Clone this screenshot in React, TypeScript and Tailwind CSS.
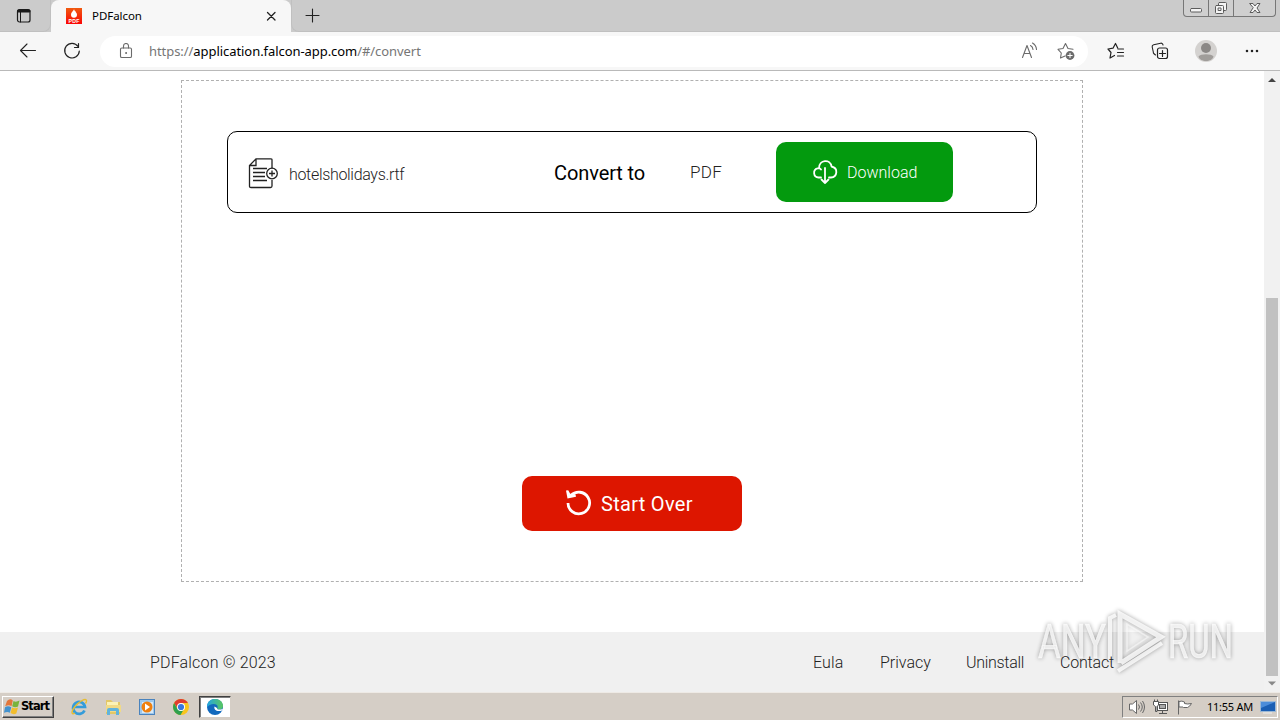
import type { ReactNode } from "react";

const footerLinks = [
  { label: "Eula", className: "w-[31px] tracking-[0.150px]" },
  { label: "Privacy", className: "ml-9 w-[51px]" },
  { label: "Uninstall", className: "ml-[35px] w-[58px] tracking-[-0.300px]" },
  { label: "Contact", className: "ml-9 w-[54px] tracking-[-0.200px]" },
];

function Icon({ size = 16, className = "", children }: { size?: number; className?: string; children: ReactNode }) {
  return (
    <svg
      width={size}
      height={size}
      viewBox={`0 0 ${size} ${size}`}
      fill="none"
      stroke="currentColor"
      strokeLinecap="round"
      strokeLinejoin="round"
      className={`block shrink-0 ${className}`}
    >
      {children}
    </svg>
  );
}

function WindowControls() {
  return (
    <div className="mr-[4px] ml-auto flex h-[17px] w-[93px] rounded-b-[4px] border border-t-0 border-[#777] bg-[#cfcfcf] text-[#5c5c5c]">
      <div className="flex w-[25px] justify-center border-r border-[#777]">
        <Icon size={14} className="mt-[1px]">
          <rect x="1.500" y="7.500" width="11" height="3.500" rx="1" fill="#f4f4f4" />
        </Icon>
      </div>
      <div className="flex w-[25px] justify-center border-r border-[#777]">
        <Icon size={14} className="mt-[1px]">
          <rect x="4.500" y="1.500" width="8" height="8" rx="1" fill="#f4f4f4" />
          <rect x="1.500" y="4.500" width="8" height="8" rx="1" fill="#f4f4f4" />
          <rect x="4.500" y="7" width="2.500" height="2.500" />
        </Icon>
      </div>
      <div className="flex flex-1 justify-center">
        <Icon size={14} className="mt-[1px]">
          <path d="M2 2.500h3l2 2.500 2-2.500h3L9 7l3 4.500H9L7 9l-2 2.500H2L5 7z" fill="#f4f4f4" />
        </Icon>
      </div>
    </div>
  );
}

function TabStrip() {
  return (
    <div className="flex h-8 shrink-0 bg-[#cbcbcb]">
      <div className="flex w-[51px] rounded-br-lg border-r border-b border-[#c0c0c0] pt-2 pl-4">
        <Icon className="text-[#1b1b1b]">
          <rect x="1.500" y="1.500" width="12.500" height="12.500" rx="2" strokeWidth="1.200" />
          <path d="M2.500 3h10.500" strokeWidth="3" />
          <path d="M4.500 4v10" strokeWidth="1" />
        </Icon>
      </div>
      <div className="flex h-8 w-[240px] rounded-t-lg bg-[#f7f7f7] pl-[15px]">
        <svg width="16" height="16" viewBox="0 0 16 16" className="mt-2 shrink-0">
          <defs>
            <linearGradient id="fav" x1="0" y1="0" x2="0" y2="1">
              <stop offset="0" stopColor="#f05a10" />
              <stop offset="1" stopColor="#fa0505" />
            </linearGradient>
          </defs>
          <rect width="16" height="16" fill="url(#fav)" />
          <path d="M8 1c-.2 2-3 3-3 5.700a3 3 0 0 0 6 0C11 5 9.500 4.500 9.500 3.300 8.800 3 8.200 2 8 1z" fill="#fff" />
          <text x="2.500" y="15" fontSize="5.200" fontWeight="700" fill="#fff" textLength="11" fontFamily="Liberation Sans, sans-serif">
            PDF
          </text>
        </svg>
        <span className="mt-2 ml-[10px] w-[50px] text-[11.500px] leading-4 tracking-[-0.050px] whitespace-nowrap">PDFalcon</span>
        <Icon size={10} className="mt-[11px] ml-[124px] text-[#222]">
          <path d="M1.500 1.500l7.500 7.500M9 1.500L1.500 9" strokeWidth="1.300" />
        </Icon>
      </div>
      <div className="flex flex-1 rounded-bl-lg border-b border-l border-[#c0c0c0] pl-[13px]">
        <Icon className="mt-2 text-[#222]">
          <path d="M7.500 1v13M1 7.500h13" strokeWidth="1.100" />
        </Icon>
        <WindowControls />
      </div>
    </div>
  );
}

function Toolbar() {
  return (
    <div className="flex h-[39px] shrink-0 items-center border-b border-[#b9b9b9] bg-[#f7f7f7] text-[#222]">
      <Icon size={18} className="ml-[19px]">
        <path d="M16.500 8.500h-15M8 2L1.500 8.500 8 15" strokeWidth="1.100" />
      </Icon>
      <Icon size={18} className="ml-[26px]">
        <path d="M15 4.500A7.300 7.300 0 1 0 16.300 9M15.500 1.500v4h-4" strokeWidth="1.200" />
      </Icon>
      <div className="ml-[19px] flex h-[31px] w-[988px] items-center rounded-full bg-white">
        <Icon className="ml-[18px] text-[#6b6b6b]">
          <rect x="2.500" y="5" width="11" height="9.500" rx="1.300" strokeWidth="1.100" />
          <path d="M5.500 5V3a2.500 2.500 0 0 1 5 0v2" strokeWidth="1.100" />
          <circle cx="8" cy="10" r=".5" fill="currentColor" />
        </Icon>
        <div className="ml-[15px] w-[860px] text-[13px] leading-4 tracking-[-0.060px] whitespace-nowrap text-[#767676]">
          https://<span className="text-black">application.falcon-app.com</span>/#/convert
        </div>
        <Icon size={18} className="ml-[12px] text-[#6b6b6b]">
          <path d="M1.500 15.500L6 3.500l4.500 12M3 11.500h6M9.500 3.500a5 5 0 0 1 2.500 4M11.500 1a8 8 0 0 1 4 6.500" strokeWidth="1.100" />
        </Icon>
        <Icon size={18} className="ml-[18px] text-[#6b6b6b]">
          <path d="M8 14l-4.500 2 .8-5L1 7.300l5-.8 2.500-5 2.500 5 5 .8" strokeWidth="1.100" />
          <circle cx="13" cy="13.500" r="4.400" fill="currentColor" stroke="none" />
          <path d="M13 11.300v4.400M10.800 13.500h4.400" stroke="#fff" />
        </Icon>
      </div>
      <Icon size={18} className="ml-[19px]">
        <path d="M7.500 13.500L3 16l1-5.500L1 7l5-.8 2.500-4.700 2.200 4.500M11 7h5.500M10.500 10.500h6M10.500 14h6" strokeWidth="1.200" />
      </Icon>
      <Icon size={18} className="ml-[26px]">
        <path d="M4.500 13L3 11.800A2 2 0 0 1 2.300 10L1.200 5a2 2 0 0 1 1.500-2.300l7-1.500A2 2 0 0 1 12 3" strokeWidth="1.100" />
        <rect x="6.500" y="6" width="10" height="10.500" rx="2" strokeWidth="1.200" />
        <path d="M11.500 8.500v6M8.500 11.500h6" strokeWidth="1.200" />
      </Icon>
      <svg width="22" height="22" viewBox="0 0 22 22" className="ml-[26px] shrink-0">
        <circle cx="11" cy="11" r="11" fill="#d4d2d0" />
        <circle cx="11" cy="8" r="5" fill="#8b8886" />
        <path d="M3.500 16.500c2-3 13-3 15 0-1.500 6-13.500 6-15 0z" fill="#a09d9a" />
      </svg>
      <Icon size={18} className="ml-[26px]">
        <path d="M4 9h.01M9 9h.01M14 9h.01" strokeWidth="2.600" />
      </Icon>
    </div>
  );
}

function FileRow() {
  return (
    <div className="flex h-[82px] items-center rounded-[10px] border border-black">
      <svg width="31" height="31" viewBox="0 0 31 31" fill="none" stroke="#222" strokeWidth="1.300" className="mt-[3px] ml-5 shrink-0">
        <path d="M24 10.500V2Q24 .800 22.500 .800H8L1.500 7.500V28.500Q1.500 29.500 3 29.500H22.500q1.500 0 1.500-1.500V22M8 1v6.500H1.500" />
        <path d="M5 10.500h14M5 14.500h12M5 18.500h12M5 22.500h14" />
        <circle cx="24" cy="15.500" r="5.300" />
        <path d="M24 12.500v6M21 15.500h6" />
      </svg>
      <span className="mt-[5px] ml-[10px] w-[265px] text-[16px] font-light tracking-[-0.320px] text-[#222]">hotelsholidays.rtf</span>
      <span className="mt-[2px] w-[136px] text-[20px] tracking-[-0.100px] text-black">Convert to</span>
      <span className="mt-px w-[86px] text-[17px] font-light tracking-[0.300px] text-[#222]">PDF</span>
      <button className="flex h-[60px] w-[177px] items-center rounded-[10px] bg-[#039a0e] pl-9 text-white">
        <svg width="26" height="26" viewBox="0 0 26 26" fill="none" stroke="currentColor" strokeWidth="1.800" strokeLinecap="round" strokeLinejoin="round">
          <path d="M9 18.500H6.500A4.700 4.700 0 0 1 5.500 9.300C6.500 9 8 9 9 10.500M7 9.300C7 .5 18.500-.5 19.500 7.500 26.500 9 25.500 18 19 18.500h-2" />
          <path d="M13 9v15M9.500 20.500L13 24l3.500-3.500" />
        </svg>
        <span className="mt-px ml-[9px] text-[16px] font-light">Download</span>
      </button>
    </div>
  );
}

function Scrollbar() {
  return (
    <div className="flex w-4 shrink-0 flex-col items-center bg-[#f1f1f1]">
      <svg width="16" height="17" viewBox="0 0 16 17">
        <path d="M4 11l4-4 4 4z" fill="#444" />
      </svg>
      <div className="mt-[210px] h-[378px] w-3 bg-[#c1c1c1]" />
      <svg width="16" height="16" viewBox="0 0 16 16">
        <path d="M4 5.500h8l-4 4z" fill="#888" />
      </svg>
    </div>
  );
}

function Watermark() {
  return (
    <svg
      width="226"
      height="80"
      viewBox="0 0 226 80"
      className="pointer-events-none absolute top-[605px] left-[1034px] drop-shadow-[0_0_2px_rgba(0,0,0,0.45)]"
    >
      <g fill="#fff" fillOpacity=".75" stroke="#fff" strokeOpacity=".75" strokeWidth=".6" fontFamily="Roboto, sans-serif" fontSize="48">
        <text x="4" y="53" textLength="68" lengthAdjust="spacingAndGlyphs">ANY</text>
        <text x="134" y="53" textLength="65" lengthAdjust="spacingAndGlyphs">RUN</text>
      </g>
      <g fill="none" stroke="#fff" strokeOpacity=".8">
        <path d="M86 58V9l41 23-40 26" strokeWidth="5" />
        <path d="M76 56V13l6-3M84 66l44-28" strokeWidth="4" />
        <path d="M93 19v27l21-14z" strokeWidth="1.500" strokeOpacity=".5" />
      </g>
    </svg>
  );
}

function WindowsFlag() {
  return (
    <svg width="16" height="16" viewBox="0 0 16 16">
      <path d="M3 2Q6-1 8.800 1.500L7.500 7.200Q5 5.500 1.200 7.200z" fill="#e3763a" />
      <path d="M9.500 2Q12 3.500 15.500 1.500L14 7.500Q11 9 8.200 7.200z" fill="#79b33c" />
      <path d="M1 8.200Q4 6.500 7.300 8.200L5.800 13.800Q3.500 12 0 13.800z" fill="#4392ce" />
      <path d="M8 8.500q3 1.500 6 0L12.300 14.500q-2.800 1.500-5.800-.5z" fill="#f2bd2c" />
    </svg>
  );
}

function Taskbar() {
  return (
    <div className="flex h-7 shrink-0 items-center border-t border-[#eeeae5] bg-[#d5cec6] pt-px">
      <button className="ml-[2px] flex h-[22px] w-[52px] items-center border border-white border-r-[#404040] border-b-[#404040] pl-[1px] shadow-[inset_-1px_-1px_0_#808080]">
        <WindowsFlag />
        <span className="ml-px font-['DejaVu_Sans'] text-[11.500px] font-bold tracking-[-0.950px]">Start</span>
      </button>
      <svg width="18" height="18" viewBox="0 0 18 18" fill="none" className="ml-4">
        <path d="M14.500 12.500A6 6 0 1 1 15 9H4" stroke="#349cda" strokeWidth="2.700" />
        <path d="M5 15c-4 2.500-4-1.500 0-6.500S16-.5 16.500 2.500c.2 1-.3 2-1 3" stroke="#e6bd32" strokeWidth="1.400" />
      </svg>
      <svg width="18" height="18" viewBox="0 0 18 18" className="ml-4">
        <path d="M2 2h5l2 2h7v12H2z" fill="#e3c766" />
        <path d="M3 4h11v3H3z" fill="#fcf2b5" />
        <path d="M2 7h15v7H2z" fill="#f1da86" />
        <path d="M3 17v-5q0-2 2-2h8q2 0 2 2v5h-3v-4H6v4z" fill="#61b3dc" />
      </svg>
      <svg width="16" height="16" viewBox="0 0 16 16" className="ml-[17px]">
        <rect x=".5" y=".5" width="15" height="15" fill="#9dc8ec" stroke="#4a83bd" />
        <rect x="3" y="3" width="11" height="11" fill="#d7e9f8" />
        <circle cx="8" cy="8" r="5.500" fill="#ef800e" />
        <path d="M6 4.500l5 3.500-5 3.500z" fill="#fff" />
      </svg>
      <svg width="16" height="16" viewBox="0 0 16 16" className="ml-[18px]">
        <circle cx="8" cy="8" r="8" fill="#f9c51d" />
        <path d="M1.100 4A8 8 0 0 1 14.900 4H8L5 10z" fill="#df3c30" />
        <path d="M1.100 4A8 8 0 0 0 7.500 16L11 10l-6.500 0z" fill="#2fa04f" />
        <circle cx="8" cy="8" r="4" fill="#fff" />
        <circle cx="8" cy="8" r="3.100" fill="#3977df" />
      </svg>
      <div className="ml-[10px] flex h-[22px] w-8 items-center justify-center border border-[#404040] border-r-[#d5cec6] border-b-[#d5cec6] bg-white shadow-[inset_1px_1px_0_#808080]">
        <svg width="18" height="18" viewBox="0 0 18 18">
          <defs>
            <linearGradient id="edge" x1="0" y1="0" x2="1" y2="0">
              <stop offset="0" stopColor="#22a5e3" />
              <stop offset="1" stopColor="#5ac75d" />
            </linearGradient>
          </defs>
          <circle cx="9" cy="9" r="8" fill="#1269bd" />
          <path d="M1 9C1-2 17-1 17 8c0 4-5 4-6 2.500 2-3-1-5-4-4.500S2 8 1 9z" fill="url(#edge)" />
          <path d="M8.500 8.500C7.500 12 11 14 16 12.500l1.500-2c-2 1.500-7 1.500-6.500-.5z" fill="#fff" />
        </svg>
      </div>
      <div className="mr-[2px] ml-auto flex h-[22px] w-[156px] items-center border border-[#808080] border-r-white border-b-white">
        <svg width="17" height="16" viewBox="0 0 17 16" fill="#fff" stroke="#666" strokeWidth="1" className="ml-[5px]">
          <path d="M1.500 5h3l4-3.500v13l-4-3.500h-3z" />
          <path d="M10.500 5.500q2 2.500 0 5M12.500 3.500q3.500 4.500 0 9M14.500 2q4 6 0 12" fill="none" />
        </svg>
        <svg width="17" height="16" viewBox="0 0 17 16" fill="#fff" stroke="#555" className="ml-[7px]">
          <rect x="5.500" y="3.500" width="10" height="8" />
          <rect x="7.500" y="5.500" width="6" height="4" fill="#aaa" />
          <path d="M10.500 12v2M7 14.500h8" />
          <path d="M1.500 2.500h5V6L5 7.500v5H3.500v-5L1.500 6zM2.500.500v2M5.500.500v2" />
        </svg>
        <svg width="17" height="16" viewBox="0 0 17 16" fill="#fff" stroke="#666" className="ml-[7px]">
          <path d="M2.500 1.500v14M3 2.500q3-1 5.500.5v1.500q3 1 7 0-1.500 3-4 4H7.500L7 8H3z" />
        </svg>
        <span className="ml-[14px] w-[47px] font-['Noto_Sans'] text-[11px] tracking-[-0.250px] whitespace-nowrap">11:55 AM</span>
        <svg width="16" height="14" viewBox="0 0 16 14" className="ml-[6px]">
          <rect x=".5" y="1.500" width="15" height="10" fill="#1b5fb4" stroke="#9cb8d5" />
          <path d="M1 2h14L1 8z" fill="#4c8dda" />
          <path d="M3 13h9" stroke="#eee" />
        </svg>
      </div>
    </div>
  );
}

export default function App() {
  return (
    <div className="relative flex h-[720px] w-[1280px] flex-col overflow-hidden bg-white font-['Noto_Sans',sans-serif] text-black">
      <TabStrip />
      <Toolbar />

      <div className="flex h-[621px] shrink-0 font-[Roboto,sans-serif]">
        <main className="flex w-[1264px] flex-col">
          <div className="mt-[9px] ml-[181px] flex h-[502px] w-[902px] shrink-0 flex-col border border-dashed border-[#b0b0b0] px-[45px] pt-[50px]">
            <FileRow />
            <button className="mt-[263px] flex h-[55px] w-[220px] items-center self-center rounded-[10px] bg-[#dd1600] pl-[43px] text-white">
              <svg width="28" height="28" viewBox="0 0 28 28" fill="none" stroke="currentColor" className="mb-[3px]">
                <path d="M6 7.500A10.800 10.800 0 1 1 3 15" strokeWidth="2.800" />
                <path d="M1 2.500l2.200-.3 2 3.500 5.300.5.500 2.500-8.500 1.800z" fill="currentColor" stroke="none" />
              </svg>
              <span className="ml-[8px] text-[20px] tracking-[0.300px]">Start Over</span>
            </button>
          </div>

          <footer className="mt-[50px] flex h-[60px] shrink-0 items-center bg-[#f0f0f0] pt-[2px] pl-[150px] text-[16px] font-light text-[#222]">
            <span className="w-[663px] tracking-[0.170px]">PDFalcon © 2023</span>
            {footerLinks.map((link) => (
              <a key={link.label} className={`relative z-10 ${link.className}`}>
                {link.label}
              </a>
            ))}
          </footer>
        </main>
        <Scrollbar />
      </div>

      <Taskbar />
      <Watermark />
    </div>
  );
}
